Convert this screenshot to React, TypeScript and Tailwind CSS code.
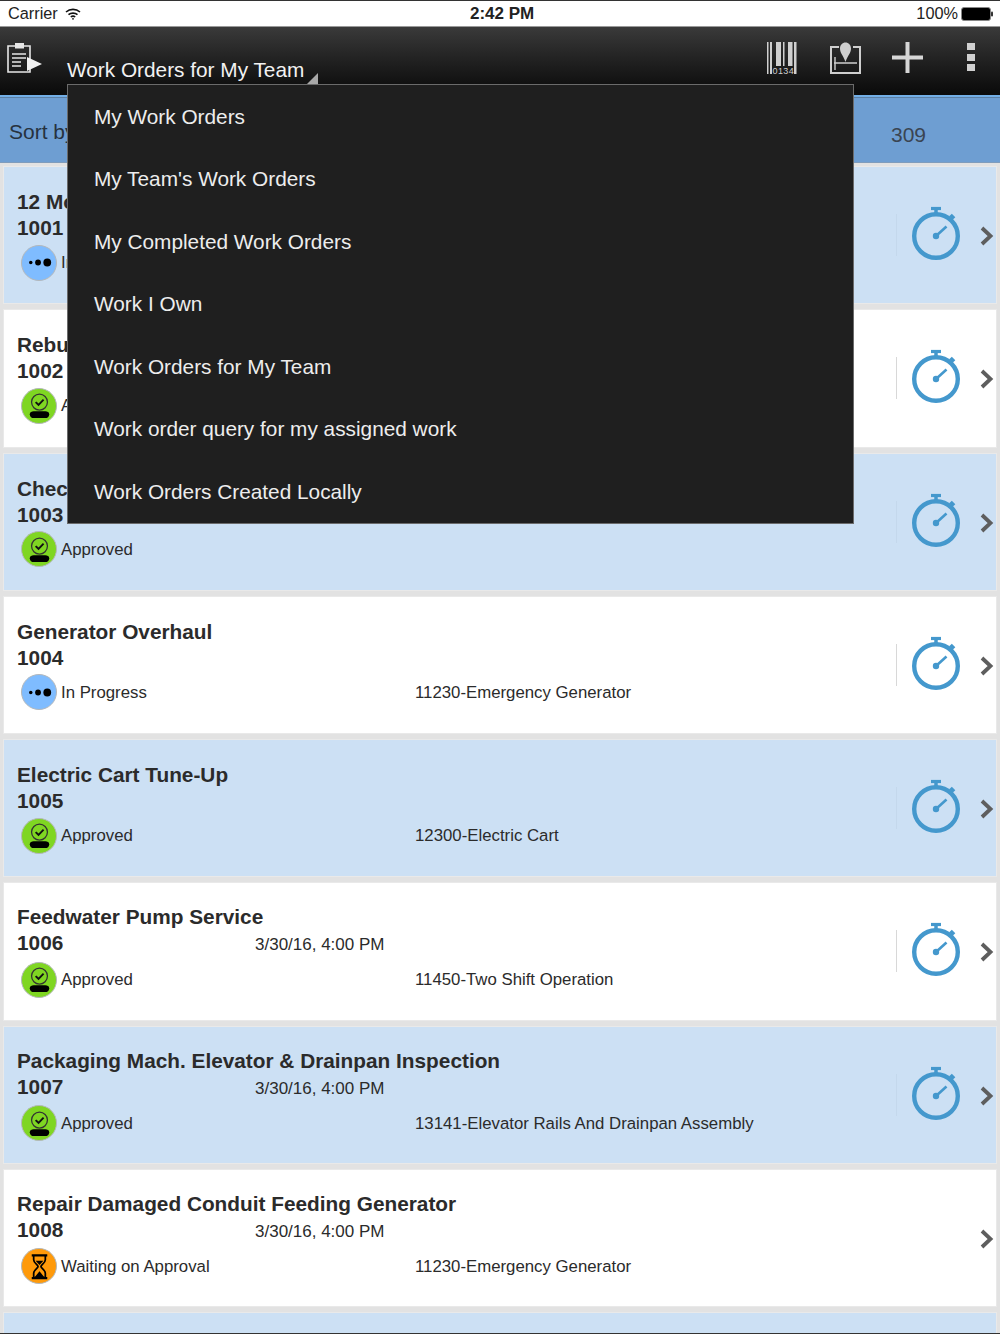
import React from "react";

const cards = [
  { title: "12 Month Inspection", id: "1001", status: "In Progress", kind: "progress", date: "", loc: "", blue: true, timer: true },
  { title: "Rebuild Pump", id: "1002", status: "Approved", kind: "ok", date: "", loc: "", blue: false, timer: true },
  { title: "Check", id: "1003", status: "Approved", kind: "ok", date: "", loc: "", blue: true, timer: true },
  { title: "Generator Overhaul", id: "1004", status: "In Progress", kind: "progress", date: "", loc: "11230-Emergency Generator", blue: false, timer: true },
  { title: "Electric Cart Tune-Up", id: "1005", status: "Approved", kind: "ok", date: "", loc: "12300-Electric Cart", blue: true, timer: true },
  { title: "Feedwater Pump Service", id: "1006", status: "Approved", kind: "ok", date: "3/30/16, 4:00 PM", loc: "11450-Two Shift Operation", blue: false, timer: true },
  { title: "Packaging Mach. Elevator & Drainpan Inspection", id: "1007", status: "Approved", kind: "ok", date: "3/30/16, 4:00 PM", loc: "13141-Elevator Rails And Drainpan Assembly", blue: true, timer: true },
  { title: "Repair Damaged Conduit Feeding Generator", id: "1008", status: "Waiting on Approval", kind: "wait", date: "3/30/16, 4:00 PM", loc: "11230-Emergency Generator", blue: false, timer: false },
];

const menu = [
  "My Work Orders",
  "My Team's Work Orders",
  "My Completed Work Orders",
  "Work I Own",
  "Work Orders for My Team",
  "Work order query for my assigned work",
  "Work Orders Created Locally",
];

function StatusIcon({ kind }: { kind: string }) {
  const bg = kind === "progress" ? "bg-[#7fbcff]" : kind === "ok" ? "bg-[#7fd622]" : "bg-[#ff9a0a]";
  return (
    <div className={`w-[36px] h-[36px] rounded-full border-[1.5px] border-[#b4b8bb] flex items-center justify-center shrink-0 ${bg}`}>
      <svg width="33" height="33" viewBox="0 0 34 34">
        {kind === "progress" && (
          <g fill="#000">
            <circle cx="8" cy="17" r="1.8" />
            <circle cx="15.5" cy="17" r="3" />
            <circle cx="25" cy="17" r="4" />
          </g>
        )}
        {kind === "ok" && (
          <g>
            <circle cx="17" cy="13.500" r="8.200" fill="none" stroke="#333" strokeWidth="1.3" />
            <path d="M13 13.500 L16 16.300 L21.200 11" fill="none" stroke="#111" strokeWidth="2" />
            <path d="M7 26 C7 23.500 9 22.800 11 22.800 H23 C25 22.800 27 23.500 27 26 C27 29 25 30 23 30 H11 C9 30 7 29 7 26 Z" fill="#000" />
          </g>
        )}
        {kind === "wait" && (
          <g>
            <path d="M9 5.500 H25 M9 29 H25" stroke="#000" strokeWidth="2.4" fill="none" />
            <path d="M11 6 V10 C11 13.500 15.500 15.500 15.500 17 C15.500 18.500 11 20.500 11 24 V28.500 H23 V24 C23 20.500 18.500 18.500 18.500 17 C18.500 15.500 23 13.500 23 10 V6" fill="none" stroke="#000" strokeWidth="1.8" />
            <path d="M13 11 H21 L17 15.500 Z M12 28 L17 22 L22 28 Z" fill="#000" />
          </g>
        )}
      </svg>
    </div>
  );
}

function Timer() {
  return (
    <svg width="50" height="56" viewBox="0 0 50 56" fill="none" stroke="#4498cd">
      <circle cx="25" cy="31" r="21.8" strokeWidth="4.4" />
      <path d="M20 3.500 H30" strokeWidth="3.2" />
      <path d="M25 4 V9" strokeWidth="3.500" />
      <path d="M39.500 10 L43 13.500" strokeWidth="3.800" />
      <path d="M25 31 L35.500 21.500" strokeWidth="2.600" />
      <circle cx="25" cy="31" r="3.200" fill="#4498cd" stroke="none" />
    </svg>
  );
}

function Card({ c }: { c: (typeof cards)[number] }) {
  return (
    <div className={`h-[138.25px] shrink-0 flex items-center border border-[#e9e9e9] ${c.blue ? "bg-[#cce0f4]" : "bg-white"}`}>
      <div className="flex-1 min-w-0 pl-[13px] text-[#2b2b2b]">
        <div className="text-[20.8px] leading-[26px] font-bold whitespace-nowrap">{c.title}</div>
        <div className="flex items-baseline leading-[26px]">
          <div className="w-[238px] text-[20.8px] font-bold">{c.id}</div>
          <div className="text-[17px]">{c.date}</div>
        </div>
        <div className="flex items-center h-[37px] mt-[3px] pl-[4px] text-[16.8px]">
          <StatusIcon kind={c.kind} />
          <div className="w-[358px] pl-[4px] whitespace-nowrap">{c.status}</div>
          <div className="whitespace-nowrap">{c.loc}</div>
        </div>
      </div>
      {c.timer && <div className={`w-px h-[42px] ${c.blue ? "bg-[#c4d8ec]" : "bg-[#d8d8d8]"}`} />}
      {c.timer && (
        <div className="ml-[14px] -mt-[4px]">
          <Timer />
        </div>
      )}
      <svg className="ml-[19px] mr-[2px] mt-[2px]" width="14" height="20" viewBox="0 0 14 20" fill="none">
        <path d="M2 2 L10.500 10 L2 18" stroke="#5e5e5e" strokeWidth="3.800" />
      </svg>
    </div>
  );
}

export default function App() {
  return (
    <div className="relative w-[1000px] h-[1334px] overflow-hidden flex flex-col bg-[#e2e2e2] font-['Liberation_Sans',Arial,sans-serif]">
      <div className="h-[27px] shrink-0 bg-white border-t border-t-[#333] border-b border-b-[#999] relative flex items-center justify-between pl-[8px] pr-[6px] text-[16.3px] text-[#222]">
        <div className="flex items-center gap-[7px]">
          <span>Carrier</span>
          <svg width="16" height="12" viewBox="0 0 16 12" fill="none" stroke="#111" strokeWidth="1.6">
            <path d="M1 4 C5 0.5 11 0.5 15 4" />
            <path d="M3.5 6.7 C6 4.6 10 4.6 12.5 6.7" />
            <path d="M5.8 9 C7 8 9 8 10.2 9" />
            <circle cx="8" cy="10.8" r="0.9" fill="#111" stroke="none" />
          </svg>
        </div>
        <div className="absolute left-[470px] font-bold text-[17px]">2:42 PM</div>
        <div className="flex items-center gap-[3px]">
          <span>100%</span>
          <svg width="33" height="14" viewBox="0 0 33 14">
            <rect x="0.5" y="0.5" width="29" height="13" rx="2.5" fill="#000" stroke="#888" />
            <rect x="30" y="4.5" width="2" height="5" rx="1" fill="#333" />
          </svg>
        </div>
      </div>

      <div className="h-[68px] shrink-0 bg-gradient-to-b from-[#3a3a3a] to-[#0a0a0a] flex items-start text-white relative">
        <svg className="ml-[6px] mt-[13px] shrink-0" width="37" height="36" viewBox="0 0 37 36" fill="none" stroke="#e6e6e6">
          <path d="M10 6 H2 V32 H24 V6 H16" strokeWidth="1.6" />
          <rect x="9" y="3" width="9" height="5.500" fill="#e6e6e6" stroke="none" />
          <path d="M6 14 H20 M6 18 H20 M6 22 H15 M6 26 H15" strokeWidth="1.6" />
          <path d="M21 17 L36 24 L21 31 Z" fill="#f2f2f2" stroke="none" />
        </svg>
        <div className="ml-[24px] mt-[30px] text-[20.8px] leading-[26px] text-[#f2f2f2] whitespace-nowrap">Work Orders for My Team</div>
        <div className="absolute left-[307px] top-[46px] w-0 h-0 border-l-[11px] border-l-transparent border-b-[11px] border-b-[#a8a8a8]" />
        <div className="ml-auto flex items-start mt-[15px]">
          <svg width="32" height="33" viewBox="0 0 32 33" fill="#cfcfcf">
            <rect x="1" y="0" width="1.500" height="32" />
            <rect x="4" y="0" width="2" height="32" />
            <rect x="10" y="0" width="5" height="24" />
            <rect x="17" y="0" width="1.500" height="24" />
            <rect x="22" y="0" width="4.500" height="24" />
            <rect x="28" y="0" width="2.500" height="32" />
            <text x="6.500" y="32" fontSize="9" fontFamily="Liberation Sans" fill="#cfcfcf" letterSpacing="0.4">0134</text>
          </svg>
          <svg className="ml-[31px]" width="33" height="33" viewBox="0 0 33 33" fill="none" stroke="#cfcfcf">
            <path d="M10 5 H2 V31 H31 V5 H24" strokeWidth="2" />
            <path d="M5 21 H28 M6 15 V28" strokeWidth="1.4" />
            <path d="M16.500 20 C14 13 11 11 11 6.500 C11 3 13.500 0.500 16.500 0.500 C19.500 0.500 22 3 22 6.500 C22 11 19 13 16.500 20 Z" fill="#cfcfcf" stroke="none" />
          </svg>
          <svg className="ml-[30px]" width="31" height="31" viewBox="0 0 31 31" fill="#d6d6d6">
            <rect x="13.500" y="0" width="4" height="31" />
            <rect x="0" y="13.500" width="31" height="4" />
          </svg>
          <svg className="ml-[44px] mr-[25px]" width="8" height="30" viewBox="0 0 8 30" fill="#d0d0d0">
            <rect x="0" y="1" width="8" height="7" />
            <rect x="0" y="12" width="8" height="7" />
            <rect x="0" y="22" width="8" height="7" />
          </svg>
        </div>
      </div>

      <div className="h-[68px] shrink-0 bg-[#6e9ed2] border-b border-b-[#7f9cbc] flex flex-col text-[21px]">
        <div className="h-[2px] shrink-0 bg-[#72aee6]" />
        <div className="h-px shrink-0 bg-[#5c7fa3]" />
        <div className="flex-1 flex items-center">
          <div className="pl-[9px] mt-[3px] text-[#26323f]">Sort by</div>
          <div className="ml-auto mr-[74px] mt-[9px] text-[#3a4552]">309</div>
        </div>
      </div>

      <div className="flex flex-col gap-[5px] pt-[3px] px-[3px]">
        {cards.map((c) => (
          <Card key={c.id} c={c} />
        ))}
        <div className="h-[30px] shrink-0 bg-[#cce0f4] border border-[#e9e9e9]" />
      </div>

      <div className="absolute left-[67px] top-[84px] w-[787px] h-[440px] bg-[#1f1f1f] border border-[#6b6b6b] flex flex-col">
        {menu.map((m) => (
          <div key={m} className="h-[62.5px] shrink-0 pl-[26px] flex items-center text-[20.8px] text-[#ededed]">
            {m}
          </div>
        ))}
      </div>
      <div className="absolute left-0 bottom-0 w-full h-px bg-[#333]" />
    </div>
  );
}
